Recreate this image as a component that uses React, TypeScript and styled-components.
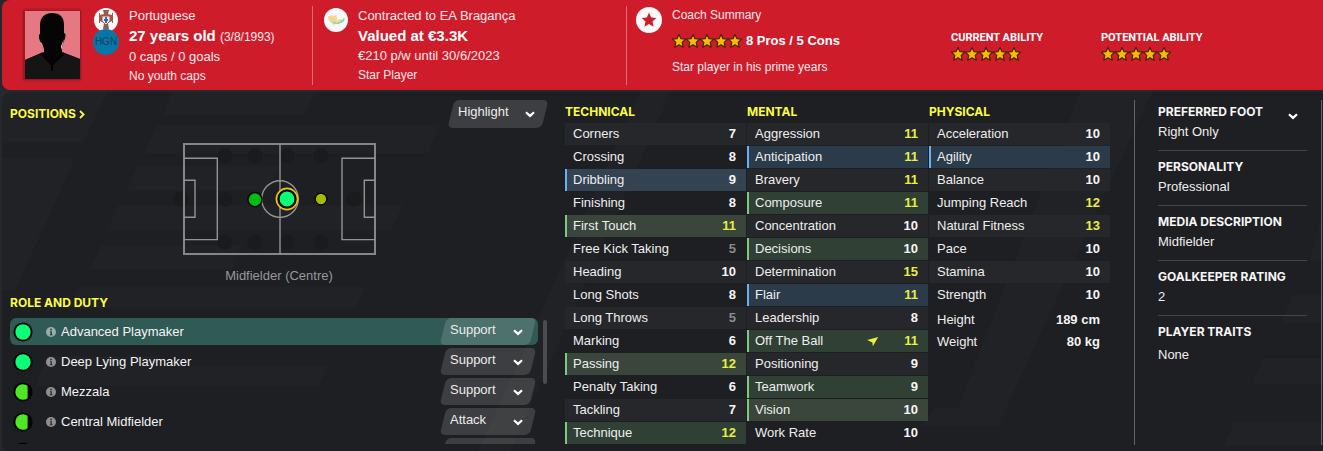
import React from "react";
import styled, { createGlobalStyle, css } from "styled-components";

const GlobalStyle = createGlobalStyle`
  *, *::before, *::after { box-sizing: border-box; }
  body {
    margin: 0;
    background: #27282c;
    color: #f4f4f4;
    font-family: "Liberation Sans", Arial, sans-serif;
    font-size: 13px;
    line-height: 20px;
  }
  h2, h3, p, dl, dt, dd, ul { margin: 0; padding: 0; }
  ul { list-style: none; }
  button, select { font: inherit; color: inherit; }
`;

const Page = styled.div`
  display: flex;
  flex-direction: column;
  gap: 2px;
  padding-left: 2px;
`;

/* ---------- header ---------- */

const Header = styled.header`
  display: grid;
  grid-template-columns: 310fr 314fr 697fr;
  background: #ce1c2b;
  border-radius: 8px 0 0 8px;
  color: #fbe9ea;
  height: 90px;
`;

const HeaderSection = styled.section<{ $pad: number; $divided?: boolean }>`
  display: flex;
  align-items: flex-start;
  gap: 10px;
  margin: 6px 0;
  padding-left: ${(p) => p.$pad}px;
  border-left: ${(p) => (p.$divided ? "1px solid #e06c76" : "0")};
  white-space: nowrap;
`;

const Portrait = styled.svg`
  flex: none;
  width: 62px;
  height: 76px;
  margin-top: 1px;
`;

const BadgeStack = styled.div<{ $top: number }>`
  display: flex;
  flex-direction: column;
  align-items: center;
  padding-top: ${(p) => p.$top}px;
`;

const RoundBadge = styled.svg<{ $size: number }>`
  flex: none;
  display: block;
  width: ${(p) => p.$size}px;
  height: ${(p) => p.$size}px;
`;

const StatusBadge = styled.span`
  display: flex;
  align-items: center;
  justify-content: center;
  width: 26px;
  height: 26px;
  margin-top: -3px;
  border-radius: 50%;
  background: #0777a9;
  color: #173f58;
  font-size: 10px;
`;

const Lines = styled.div`
  display: flex;
  flex-direction: column;
`;

const Line = styled.p<{ $small?: boolean }>`
  font-size: ${(p) => (p.$small ? 12 : 13)}px;
  line-height: ${(p) => (p.$small ? 18 : 20)}px;
`;

const LeadLine = styled.p`
  color: #fff;
  font-size: 15px;
  font-weight: 700;
  line-height: 20px;
`;

const BirthDate = styled.span`
  color: #fbe9ea;
  font-size: 12px;
  font-weight: 400;
`;

const CoachLines = styled(Lines)`
  gap: 7px;
  flex: none;
  width: 269px;
`;

const Rating = styled.div`
  display: flex;
  align-items: center;
  gap: 4px;
  color: #fff;
  font-weight: 700;
`;

const Ability = styled.div`
  flex: none;
  width: 140px;
  padding-top: 23px;
`;

const AbilityName = styled.h3`
  color: #fff;
  font-family: Roboto, "Liberation Sans", sans-serif;
  font-size: 11px;
  font-weight: 700;
  line-height: 18px;
`;

const StarStrip = styled.svg`
  display: block;
  flex: none;
  width: 70px;
  height: 14px;
`;

/* ---------- main panel ---------- */

const Panel = styled.main`
  position: relative;
  display: grid;
  grid-template-columns: 546fr 545fr 203fr;
  column-gap: 9px;
  min-height: 359px;
  padding: 8px 1px 7px 8px;
  background: #1e1f22;
  border-radius: 8px 0 0 8px;
`;

const Watermark = styled.svg`
  position: absolute;
  inset: 0;
  width: 100%;
  height: 100%;
  fill: #ffffff;
  fill-opacity: 0.015;
`;

const Column = styled.div`
  position: relative;
  min-width: 0;
`;

const PositionColumn = styled(Column)`
  padding-right: 8px;
`;

const titleStyle = css`
  font-family: Inter, "Liberation Sans", sans-serif;
  font-size: 12px;
  font-weight: 700;
  line-height: 20px;
  text-transform: uppercase;
`;

const SectionTitle = styled.h2`
  ${titleStyle}
  color: #fbfb48;
  padding: 7px 0 5px;
`;

const TopBar = styled.div`
  display: flex;
  justify-content: space-between;
  align-items: center;
  height: 28px;
`;

const TitleButton = styled.button`
  ${titleStyle}
  display: flex;
  align-items: center;
  gap: 3px;
  padding: 0;
  border: 0;
  background: none;
  color: #fbfb48;
`;

const SelectShell = styled.label<{ $width: number; $height: number }>`
  position: relative;
  display: block;
  flex: none;
  width: ${(p) => p.$width}px;
  height: ${(p) => p.$height}px;
  &::before {
    content: "";
    position: absolute;
    inset: 0 3px;
    border-radius: 5px;
    background: rgba(255, 255, 255, 0.14);
    transform: skewX(-14deg);
  }
`;

const NativeSelect = styled.select`
  position: relative;
  display: block;
  width: 100%;
  height: 24px;
  padding: 0 24px 0 10px;
  border: 0;
  outline: 0;
  background: none;
  appearance: none;
  color: #ececec;
  option { color: #111; }
`;

const SelectChevron = styled.span`
  position: absolute;
  right: 13px;
  top: 50%;
  display: flex;
  margin-top: -3px;
  pointer-events: none;
`;

const PitchFigure = styled.figure`
  display: flex;
  flex-direction: column;
  align-items: center;
  gap: 11px;
  margin: 15px 0 0;
`;

const PitchCaption = styled.figcaption`
  color: #97989a;
`;

const RoleBlock = styled.section`
  display: flex;
  gap: 5px;
  height: 126px;
  padding-right: 1px;
  overflow: hidden;
`;

const RoleList = styled.ul`
  flex: 1;
  min-width: 0;
`;

const RoleRow = styled.li<{ $selected?: boolean }>`
  display: flex;
  align-items: center;
  gap: 13px;
  height: 27px;
  margin-bottom: 3px;
  padding: 0 2px 0 3px;
  border-radius: 6px;
  background: ${(p) => (p.$selected ? "#305a55" : "transparent")};
`;

const RoleButton = styled.button`
  display: flex;
  flex: 1;
  align-items: center;
  gap: 5px;
  height: 26px;
  padding: 0;
  border: 0;
  background: none;
  text-align: left;
`;

const ScrollThumb = styled.div`
  flex: none;
  width: 4px;
  height: 64px;
  margin-top: 2px;
  border-radius: 2px;
  background: #4b4c4f;
`;

/* ---------- attributes ---------- */

const AttributeGrid = styled(Column)`
  display: grid;
  grid-template-columns: repeat(3, minmax(0, 1fr));
  column-gap: 1px;
  align-items: start;
`;

const AttributeTable = styled.table`
  width: 100%;
  table-layout: fixed;
  border-spacing: 0 1px;
  caption {
    ${titleStyle}
    padding: 2px 0 0;
    color: #fbfb48;
    text-align: left;
  }
`;

type Tone = "key" | "pref" | undefined;

const fill = (tone: Tone, odd: boolean) => {
  if (tone === "key") return odd ? "#3a463c" : "#304035";
  if (tone === "pref") return odd ? "#334352" : "#2b3b4a";
  return odd ? "#26272a" : "transparent";
};

const AttributeRow = styled.tr<{ $tone: Tone; $odd: boolean }>`
  height: 22px;
  background: ${(p) => fill(p.$tone, p.$odd)};
  th {
    padding: 0 0 1px 8px;
    color: #eeeeee;
    font-weight: 400;
    text-align: left;
    line-height: 20px;
    white-space: nowrap;
    box-shadow: ${(p) =>
      p.$tone === "key" ? "inset 2px 0 #7fc884" : p.$tone === "pref" ? "inset 2px 0 #66b2f2" : "none"};
  }
`;

const Value = styled.td<{ $value: number }>`
  width: 37px;
  padding: 0 10px 1px 0;
  color: ${(p) => (p.$value > 10 ? "#e9ee45" : p.$value < 6 ? "#8a8b8d" : "#f6f6f6")};
  font-weight: 700;
  text-align: right;
  line-height: 20px;
`;

const TrendCell = styled.td`
  width: 24px;
  padding: 0;
  svg { display: block; }
`;

const Physique = styled.dl`
  display: grid;
  grid-template-columns: 1fr auto;
  grid-auto-rows: 22px;
  padding: 3px 10px 0 8px;
  dt { color: #eeeeee; }
  dd { font-weight: 700; text-align: right; }
`;

/* ---------- side column ---------- */

const Side = styled(Column)`
  border: solid #636467;
  border-width: 0 1px;
  padding: 2px 14px 0 23px;
  margin-left: 15px;
`;

const Fact = styled.section`
  position: relative;
  height: 55px;
  padding-top: 6px;
  border-bottom: 1px solid #444548;
  &:first-child { height: 49px; padding-top: 0; }
  &:last-child { border-bottom: 0; }
`;

const FactTitle = styled.h3`
  ${titleStyle}
  color: #f6f6f6;
`;

const FactValue = styled.p<{ $loose?: boolean }>`
  padding-top: ${(p) => (p.$loose ? 3 : 0)}px;
  color: #eeeeee;
`;

const ExpandButton = styled.button`
  position: absolute;
  top: 11px;
  right: 9px;
  display: flex;
  padding: 0;
  border: 0;
  background: none;
`;

/* ---------- icons ---------- */

const Chevron = () => (
  <svg width="10" height="7" viewBox="0 0 10 7" fill="none" stroke="#fff" strokeWidth="2.2" aria-hidden="true">
    <path d="M1 1.3 L5 4.9 L9 1.3" />
  </svg>
);

const STAR = "M7 .4 L9 4.7 L13.6 5.1 L10.2 8.4 L11.2 13.2 L7 10.8 L2.8 13.2 L3.8 8.4 L.4 5.1 L5 4.7 Z";

const Stars = () => (
  <StarStrip viewBox="0 0 70 14" role="img" aria-label="5 stars">
    {[0, 14, 28, 42, 56].map((x) => (
      <path
        key={x}
        d={STAR}
        transform={`translate(${x} 0)`}
        fill="#f7bd00"
        stroke="#43220f"
        strokeWidth="1.2"
        strokeLinejoin="round"
      />
    ))}
  </StarStrip>
);

const PlayerPortrait = () => (
  <Portrait viewBox="0 0 62 76" role="img" aria-label="Player portrait">
    <rect x="1" y="1" width="60" height="74" rx="4" fill="#b81a28" />
    <rect x="2" y="3" width="58" height="70" rx="2" fill="#9c1923" />
    <rect x="4" y="4" width="55" height="68" fill="#e57883" />
    <path
      d="M31 6 C23 6 19 11 19 18 L19 27 C17 27 18 35 21 36 L23 42 L23 45 L4 53 L4 72 L59 72 L59 52 L41 45 L41 40 L43 34 C45 30 45 26 43 26 L43 18 C43 10 39 6 31 6 Z"
      fill="#050505"
    />
    <path d="M4 53 L20 46 L31 56 L43 46 L59 52 L59 72 L4 72 Z" fill="#151515" />
    <path d="M20 46 L31 58 L43 46 M31 56 L31 64" fill="none" stroke="#030303" strokeWidth="2" />
    <path d="M43 32 L41 40 L40 43 L40 39 Z" fill="#f0d3d5" />
  </Portrait>
);

const NationBadge = () => (
  <RoundBadge $size={24} viewBox="0 0 24 24" role="img" aria-label="Portugal">
    <circle cx="12" cy="12" r="12" fill="#fafafa" />
    <path
      d="M9 2 H15 L14 6 L18 7 V5 H19 V15 H18 V13 L14 15 L15 21 H9 L10 15 L6 13 V15 H5 V5 H6 V7 L10 6 Z"
      fill="#9b5b4b"
    />
    <path d="M8 8 H16 V13 L12 17 L8 13 Z" fill="#eceef2" stroke="#b65245" strokeWidth="1" />
    <path d="M12 9 V15 M10 12 H14" stroke="#2d68b3" strokeWidth="2" />
    <path d="M10 3 H14 M10 19 H14" stroke="#5c7553" strokeWidth="1" />
  </RoundBadge>
);

const ClubBadge = () => (
  <RoundBadge $size={24} viewBox="0 0 24 24" role="img" aria-label="EA Bragança">
    <circle cx="12" cy="12" r="12" fill="#fafafa" />
    <path d="M4 9 Q6 6 9 8 Q13 6 13 10 Q14 13 11 15 L10 18 L8 14 Q4 12 4 9 Z" fill="#f6d493" />
    <path d="M5 12 Q10 16.5 17 13 Q20 11 20 9 Q22 13 17 15 Q10 18 5 12 Z" fill="#8bd392" />
    <path d="M13 13 L17 11 L18 12 L14 14 Z" fill="#ecc46f" />
  </RoundBadge>
);

const CoachBadge = () => (
  <RoundBadge $size={26} viewBox="0 0 26 26" aria-hidden="true">
    <circle cx="13" cy="13" r="13" fill="#fafafa" />
    <path
      d="M13 5.5 L15.2 10.4 L20.3 10.9 L16.5 14.4 L17.6 19.8 L13 17.1 L8.4 19.8 L9.5 14.4 L5.7 10.9 L10.8 10.4 Z"
      fill="#ce1c2b"
    />
  </RoundBadge>
);

const InfoIcon = () => (
  <svg width="10" height="10" viewBox="0 0 10 10" aria-hidden="true">
    <circle cx="5" cy="5" r="5" fill="#fff" fillOpacity="0.5" />
    <path d="M4 4.2 H5.8 V7.4 H6.6 V8.2 H3.7 V7.4 H4.5 V5 H4 Z M4.3 1.8 H5.8 V3.2 H4.3 Z" fill="#25282a" />
  </svg>
);

const SuitabilityIcon = ({ full }: { full?: boolean }) => (
  <svg width="20" height="20" viewBox="0 0 20 20" aria-hidden="true">
    <circle cx="10" cy="10" r="9.6" fill="#030303" />
    {full ? (
      <circle cx="10" cy="10" r="7.7" fill="#0bff76" />
    ) : (
      <path d="M14.6 3.8 V16.2 A7.7 7.7 0 1 1 14.6 3.8 Z" fill="#4be823" />
    )}
  </svg>
);

const TrendArrow = () => (
  <svg width="12" height="11" viewBox="0 0 12 11" role="img" aria-label="Rising">
    <path d="M11.2 1 L5.8 10.2 L5.4 6.4 L.2 4 Z" fill="#edf03c" />
  </svg>
);

const Pitch = () => (
  <svg width="212" height="112" viewBox="0 0 212 112" role="img" aria-label="Position map">
    <g fill="#1a1b1d">
      {[52, 82, 114, 148].map((x) => (
        <React.Fragment key={x}>
          <circle cx={x} cy="13" r="7.6" />
          <circle cx={x} cy="99" r="7.6" />
        </React.Fragment>
      ))}
      <circle cx="8" cy="56" r="7.6" />
      <circle cx="52" cy="56" r="7.6" />
      <circle cx="181" cy="56" r="7.6" />
    </g>
    <g fill="none" stroke="#929394" strokeWidth="1.4">
      <rect x="11" y="1" width="191" height="110" strokeWidth="2" stroke="#858687" />
      <path d="M107 1 V111 M11 15.3 H44.3 V96.6 H11 M11 37.3 H22 V74.3 H11 M202 15.3 H169 V96.6 H202 M202 37.3 H191.3 V74.3 H202" />
      <circle cx="107" cy="56" r="18.3" />
    </g>
    <circle cx="82" cy="56.6" r="7" fill="#04bb15" stroke="#050505" strokeWidth="1.4" />
    <circle cx="114" cy="56" r="10" fill="#0d1512" />
    <circle cx="114" cy="56" r="10.6" fill="none" stroke="#f2bd16" strokeWidth="1.7" />
    <circle cx="114" cy="56" r="8" fill="#0bff76" stroke="#050505" strokeWidth="1.2" />
    <circle cx="148" cy="56" r="5.8" fill="#a4ba00" stroke="#050505" strokeWidth="1.3" />
  </svg>
);

const BackgroundPattern = () => (
  <Watermark viewBox="2 92 1321 359" preserveAspectRatio="none" aria-hidden="true">
    <path d="M2 92 H107 L83 143 H2 Z M2 158 H75 L15 290 H2 Z" />
    <path d="M172 92 H315 L304 115 H163 Z M157 125 H440 L428 153 H144 Z M137 166 H280 L268 191 H126 Z" />
    <path d="M118 205 H403 L391 230 H107 Z M101 245 H242 L232 269 H90 Z M79 286 H365 L356 308 H69 Z" />
    <path d="M47 355 H160 L145 385 H36 Z M60 365 H327 L319 385 H50 Z" />
    <path d="M640 92 H671 L510 451 H478 Z" />
    <path d="M1080 92 H1152 L998 425 H920 L935 407 H958 Z" />
    <path d="M1323 210 V260 H1310 Z M1293 294 H1323 V322 H1281 Z M1263 358 H1323 V383 H1252 Z M1234 421 H1323 V444 H1224 Z" />
  </Watermark>
);

/* ---------- data ---------- */

type Attribute = { name: string; value: number; tone?: Tone; rising?: boolean };

const a = (name: string, value: number, tone?: Tone, rising?: boolean): Attribute => ({ name, value, tone, rising });

const technical = [
  a("Corners", 7),
  a("Crossing", 8),
  a("Dribbling", 9, "pref"),
  a("Finishing", 8),
  a("First Touch", 11, "key"),
  a("Free Kick Taking", 5),
  a("Heading", 10),
  a("Long Shots", 8),
  a("Long Throws", 5),
  a("Marking", 6),
  a("Passing", 12, "key"),
  a("Penalty Taking", 6),
  a("Tackling", 7),
  a("Technique", 12, "key"),
];

const mental = [
  a("Aggression", 11),
  a("Anticipation", 11, "pref"),
  a("Bravery", 11),
  a("Composure", 11, "key"),
  a("Concentration", 10),
  a("Decisions", 10, "key"),
  a("Determination", 15),
  a("Flair", 11, "pref"),
  a("Leadership", 8),
  a("Off The Ball", 11, "key", true),
  a("Positioning", 9),
  a("Teamwork", 9, "key"),
  a("Vision", 10, "key"),
  a("Work Rate", 10),
];

const physical = [
  a("Acceleration", 10),
  a("Agility", 10, "pref"),
  a("Balance", 10),
  a("Jumping Reach", 12),
  a("Natural Fitness", 13),
  a("Pace", 10),
  a("Stamina", 10),
  a("Strength", 10),
];

const roles = [
  { name: "Advanced Playmaker", duty: "Support", full: true },
  { name: "Deep Lying Playmaker", duty: "Support", full: true },
  { name: "Mezzala", duty: "Support", full: false },
  { name: "Central Midfielder", duty: "Attack", full: false },
];

/* ---------- parts ---------- */

const Attributes = ({ title, rows }: { title: string; rows: Attribute[] }) => (
  <AttributeTable>
    <caption>{title}</caption>
    <tbody>
      {rows.map((r, i) => (
        <AttributeRow key={r.name} $tone={r.tone} $odd={i % 2 === 0}>
          <th scope="row">{r.name}</th>
          <TrendCell>{r.rising && <TrendArrow />}</TrendCell>
          <Value $value={r.value}>{r.value}</Value>
        </AttributeRow>
      ))}
    </tbody>
  </AttributeTable>
);

const Dropdown = ({ label, value, width, height }: { label: string; value: string; width: number; height: number }) => (
  <SelectShell $width={width} $height={height}>
    <NativeSelect aria-label={label} defaultValue={value}>
      <option>{value}</option>
    </NativeSelect>
    <SelectChevron>
      <Chevron />
    </SelectChevron>
  </SelectShell>
);

export default function App() {
  return (
    <>
      <GlobalStyle />
      <Page>
        <Header>
          <HeaderSection $pad={19}>
            <PlayerPortrait />
            <BadgeStack $top={2}>
              <NationBadge />
              <StatusBadge>HGN</StatusBadge>
            </BadgeStack>
            <Lines>
              <Line>Portuguese</Line>
              <LeadLine>
                27 years old <BirthDate>(3/8/1993)</BirthDate>
              </LeadLine>
              <Line>0 caps / 0 goals</Line>
              <Line $small>No youth caps</Line>
            </Lines>
          </HeaderSection>
          <HeaderSection $pad={11} $divided>
            <BadgeStack $top={2}>
              <ClubBadge />
            </BadgeStack>
            <Lines>
              <Line>Contracted to EA Bragança</Line>
              <LeadLine>Valued at €3.3K</LeadLine>
              <Line>€210 p/w until 30/6/2023</Line>
              <Line $small>Star Player</Line>
            </Lines>
          </HeaderSection>
          <HeaderSection $pad={9} $divided>
            <BadgeStack $top={1}>
              <CoachBadge />
            </BadgeStack>
            <CoachLines>
              <Line $small>Coach Summary</Line>
              <Rating>
                <Stars />
                <span>8 Pros / 5 Cons</span>
              </Rating>
              <Line $small>Star player in his prime years</Line>
            </CoachLines>
            <Ability>
              <AbilityName>CURRENT ABILITY</AbilityName>
              <Stars />
            </Ability>
            <Ability>
              <AbilityName>POTENTIAL ABILITY</AbilityName>
              <Stars />
            </Ability>
          </HeaderSection>
        </Header>

        <Panel>
          <BackgroundPattern />
          <PositionColumn>
            <TopBar>
              <TitleButton type="button">
                Positions
                <svg width="6" height="9" viewBox="0 0 6 9" fill="none" stroke="#fbfb48" strokeWidth="1.8" aria-hidden="true">
                  <path d="M1 1 L4.6 4.5 L1 8" />
                </svg>
              </TitleButton>
              <Dropdown label="Highlight" value="Highlight" width={100} height={28} />
            </TopBar>
            <PitchFigure>
              <Pitch />
              <PitchCaption>Midfielder (Centre)</PitchCaption>
            </PitchFigure>
            <SectionTitle>Role and duty</SectionTitle>
            <RoleBlock>
              <RoleList>
                {roles.map((r, i) => (
                  <RoleRow key={r.name} $selected={i === 0}>
                    <SuitabilityIcon full={r.full} />
                    <RoleButton type="button">
                      <InfoIcon />
                      {r.name}
                    </RoleButton>
                    <Dropdown label={`${r.name} duty`} value={r.duty} width={96} height={27} />
                  </RoleRow>
                ))}
                <RoleRow>
                  <SuitabilityIcon />
                  <RoleButton as="span" />
                  <SelectShell as="span" $width={96} $height={27} />
                </RoleRow>
              </RoleList>
              <ScrollThumb />
            </RoleBlock>
          </PositionColumn>

          <AttributeGrid>
            <Attributes title="Technical" rows={technical} />
            <Attributes title="Mental" rows={mental} />
            <div>
              <Attributes title="Physical" rows={physical} />
              <Physique>
                <dt>Height</dt>
                <dd>189 cm</dd>
                <dt>Weight</dt>
                <dd>80 kg</dd>
              </Physique>
            </div>
          </AttributeGrid>

          <Side>
            <Fact>
              <FactTitle>Preferred foot</FactTitle>
              <FactValue>Right Only</FactValue>
              <ExpandButton type="button" aria-label="Show more">
                <Chevron />
              </ExpandButton>
            </Fact>
            <Fact>
              <FactTitle>Personality</FactTitle>
              <FactValue>Professional</FactValue>
            </Fact>
            <Fact>
              <FactTitle>Media description</FactTitle>
              <FactValue>Midfielder</FactValue>
            </Fact>
            <Fact>
              <FactTitle>Goalkeeper rating</FactTitle>
              <FactValue>2</FactValue>
            </Fact>
            <Fact>
              <FactTitle>Player traits</FactTitle>
              <FactValue $loose>None</FactValue>
            </Fact>
          </Side>
        </Panel>
      </Page>
    </>
  );
}
